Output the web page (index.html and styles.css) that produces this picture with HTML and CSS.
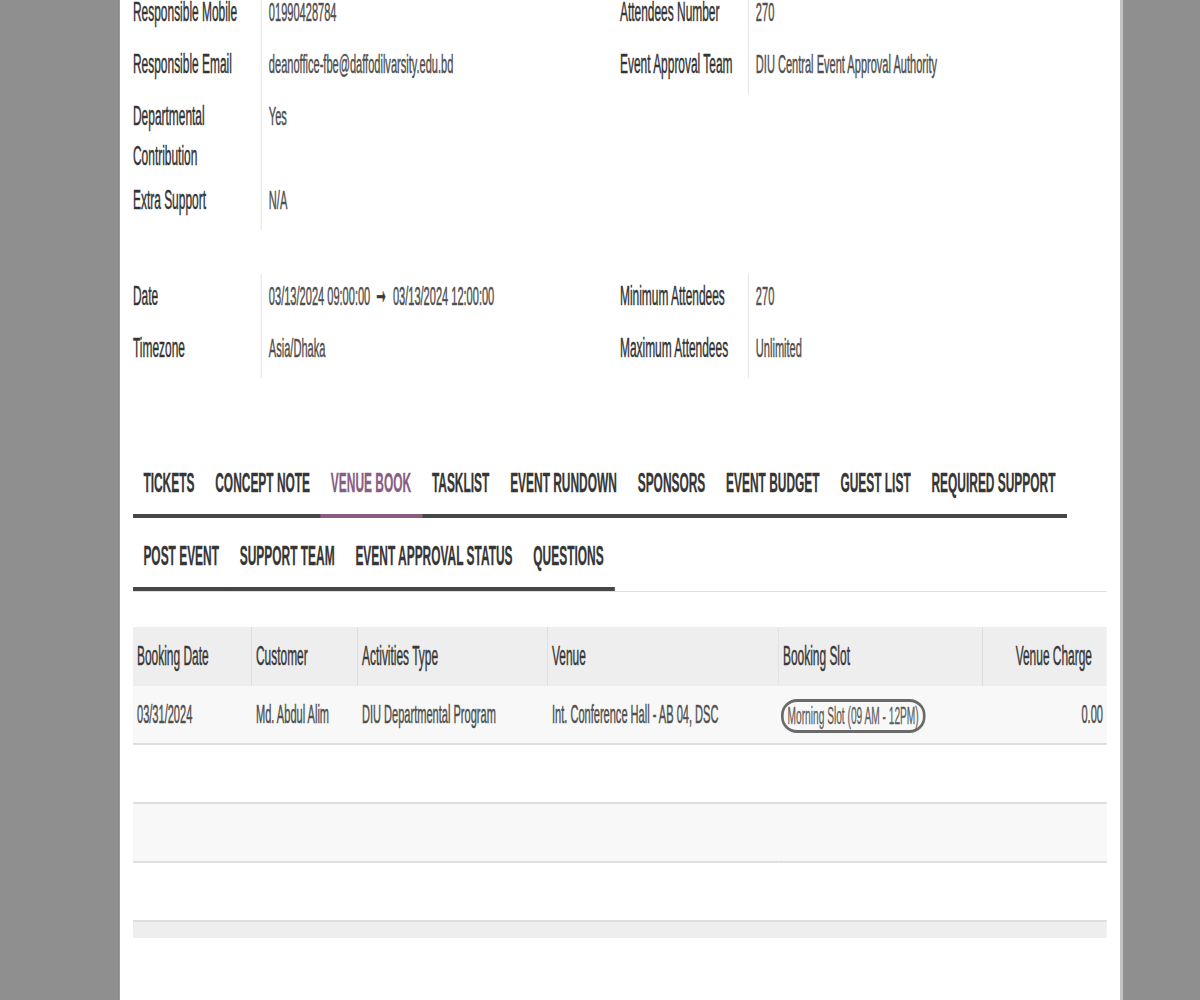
FILE: index.html
```html
<!DOCTYPE html>
<html lang="en">
<head>
<meta charset="utf-8">
<title>Event - Venue Book</title>
<link rel="stylesheet" href="styles.css">
</head>
<body>
<div class="stage">
  <div class="card">
    <div class="info info1">
      <div class="group">
        <div class="row"><div class="lbl">Responsible Mobile</div><div class="val">01990428784</div></div>
        <div class="row"><div class="lbl">Responsible Email</div><div class="val">deanoffice-fbe@daffodilvarsity.edu.bd</div></div>
        <div class="row tight"><div class="lbl">Departmental Contribution</div><div class="val">Yes</div></div>
        <div class="row"><div class="lbl">Extra Support</div><div class="val">N/A</div></div>
      </div>
      <div class="group">
        <div class="row"><div class="lbl">Attendees Number</div><div class="val">270</div></div>
        <div class="row"><div class="lbl">Event Approval Team</div><div class="val">DIU Central Event Approval Authority</div></div>
      </div>
    </div>

    <div class="info info2">
      <div class="group">
        <div class="row"><div class="lbl">Date</div><div class="val">03/13/2024 09:00:00<span class="arrow">➞</span>03/13/2024 12:00:00</div></div>
        <div class="row"><div class="lbl">Timezone</div><div class="val">Asia/Dhaka</div></div>
      </div>
      <div class="group">
        <div class="row"><div class="lbl">Minimum Attendees</div><div class="val">270</div></div>
        <div class="row"><div class="lbl">Maximum Attendees</div><div class="val">Unlimited</div></div>
      </div>
    </div>

    <ul class="tabs">
      <li class="tab">Tickets</li>
      <li class="tab">Concept Note</li>
      <li class="tab active">Venue Book</li>
      <li class="tab">Tasklist</li>
      <li class="tab">Event Rundown</li>
      <li class="tab">Sponsors</li>
      <li class="tab">Event Budget</li>
      <li class="tab">Guest List</li>
      <li class="tab">Required Support</li>
      <li class="tab">Post Event</li>
      <li class="tab">Support Team</li>
      <li class="tab">Event Approval Status</li>
      <li class="tab">Questions</li>
    </ul>

    <table class="grid">
      <colgroup>
        <col class="c1"><col class="c2"><col class="c3"><col class="c4"><col class="c5"><col class="c6">
      </colgroup>
      <thead>
        <tr>
          <th>Booking Date</th>
          <th>Customer</th>
          <th>Activities Type</th>
          <th>Venue</th>
          <th>Booking Slot</th>
          <th class="num">Venue Charge</th>
        </tr>
      </thead>
      <tbody>
        <tr>
          <td>03/31/2024</td>
          <td>Md. Abdul Alim</td>
          <td>DIU Departmental Program</td>
          <td>Int. Conference Hall - AB 04, DSC</td>
          <td class="slot"><span class="badge">Morning Slot (09 AM - 12PM)</span></td>
          <td class="num">0.00</td>
        </tr>
        <tr><td>&nbsp;</td><td></td><td></td><td></td><td></td><td></td></tr>
        <tr><td>&nbsp;</td><td></td><td></td><td></td><td></td><td></td></tr>
        <tr><td>&nbsp;</td><td></td><td></td><td></td><td></td><td></td></tr>
      </tbody>
      <tfoot>
        <tr><td colspan="6"></td></tr>
      </tfoot>
    </table>
  </div>
</div>
</body>
</html>
```

FILE: styles.css
```css
:root {
  --k: 2.2624;
}

html, body {
  margin: 0;
  padding: 0;
  height: 1000px;
  overflow: hidden;
  background: #8f8f8f;
}

.stage {
  width: calc(1200px * var(--k));
  transform: scaleX(0.442);
  transform-origin: 0 0;
  font-family: "Liberation Sans", Arial, sans-serif;
  font-size: 27px;
  -webkit-text-stroke: 0.5px currentColor;
}

.card {
  display: flow-root;
  box-sizing: border-box;
  margin-left: calc(120px * var(--k));
  width: calc(1000px * var(--k));
  min-height: 1000px;
  padding: 0 calc(13px * var(--k));
  background: #ffffff;
  box-shadow: calc(3px * var(--k)) 0 0 #c2c2c2, calc(-1px * var(--k)) 0 0 #7e7e7e;
}

/* info blocks */
.info {
  display: grid;
  grid-template-columns: 1fr 1fr;
}

.info1 {
  margin-top: -10px;
}

.info2 {
  margin-top: 44px;
}

.row {
  display: flex;
}

.lbl {
  flex: none;
  width: calc(128px * var(--k));
  padding: 2px 0 10px;
  line-height: 40px;
  color: #333333;
}

.val {
  flex: 1;
  border-left: calc(1px * var(--k)) solid #e3e3e3;
  padding: 2px 0 10px calc(7px * var(--k));
  line-height: 40px;
  font-size: 25px;
  color: #4f4f4f;
}

.row.tight .lbl,
.row.tight .val {
  padding-bottom: 2px;
}

.arrow {
  display: inline-block;
  font-family: "DejaVu Sans", sans-serif;
  font-size: 26px;
  font-weight: bold;
  color: #3a3a3a;
  padding: 0 calc(7px * var(--k)) 0 calc(6px * var(--k));
}

/* tabs */
.tabs {
  display: flex;
  flex-wrap: wrap;
  row-gap: 8px;
  list-style: none;
  margin: 75px 0 0;
  padding: 0;
  border-bottom: 1px solid #dedede;
}

.tab {
  position: relative;
  padding: 10px calc(11.4px * var(--k)) 11px calc(10.4px * var(--k));
  margin-right: calc(-1px * var(--k));
  line-height: 40px;
  border-bottom: 4px solid #464646;
  font-weight: bold;
  text-transform: uppercase;
  color: #363636;
  -webkit-text-stroke: 0.3px currentColor;
}

.tab.active {
  z-index: 1;
  color: #8a5c82;
  border-bottom-color: #8a5c82;
}

/* table */
.grid {
  width: 100%;
  margin-top: 35px;
  table-layout: fixed;
  border-collapse: separate;
  border-spacing: 0;
}

.c1 { width: calc(119px * var(--k)); }
.c2 { width: calc(106px * var(--k)); }
.c3 { width: calc(190px * var(--k)); }
.c4 { width: calc(231px * var(--k)); }
.c5 { width: calc(204px * var(--k)); }
.c6 { width: calc(124px * var(--k)); }

.grid th {
  padding: 9px calc(4px * var(--k)) 10px;
  line-height: 40px;
  background: #eeeeee;
  border-right: calc(1px * var(--k)) solid #dcdcdc;
  text-align: left;
  font-weight: normal;
  color: #383838;
  white-space: nowrap;
}

.grid th:last-child {
  border-right: 0;
}

.grid th.num {
  text-align: right;
  padding-right: calc(15px * var(--k));
}

.grid td {
  padding: 8px calc(4px * var(--k)) 9px;
  line-height: 40px;
  font-size: 25px;
  color: #4f4f4f;
  border-bottom: 2px solid #dedede;
  white-space: nowrap;
}

.grid tbody tr:nth-child(odd) td {
  background: #f8f8f8;
}

.grid td.num {
  text-align: right;
}

.grid td.slot {
  padding-left: calc(2px * var(--k));
}

.badge {
  display: inline-block;
  vertical-align: middle;
  border: 3px solid #6a6a6a;
  border-left-width: calc(3px * var(--k));
  border-right-width: calc(3px * var(--k));
  border-radius: calc(16px * var(--k)) / 16px;
  padding: 0 calc(4px * var(--k));
  line-height: 28px;
  font-size: 23px;
  color: #5e5e5e;
  -webkit-text-stroke: 0.3px currentColor;
}

.grid tfoot td {
  height: 16px;
  padding: 0;
  line-height: 16px;
  background: #eeeeee;
  border-bottom: 0;
}
```
